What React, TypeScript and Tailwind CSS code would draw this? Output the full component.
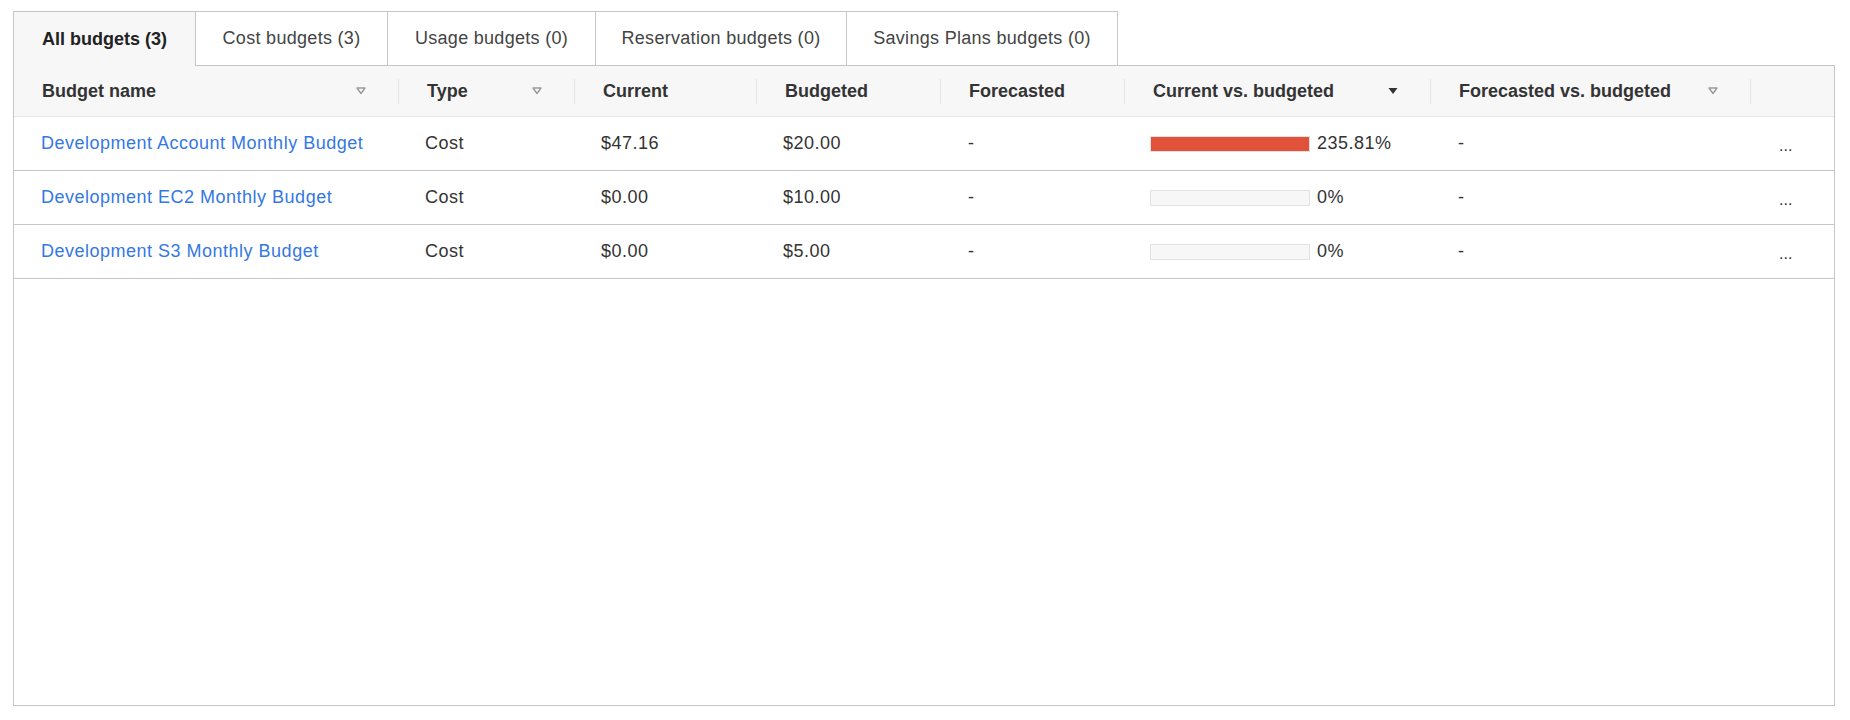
import React from "react";

const tabs = [
  { label: "All budgets (3)", w: "w-[183px]", active: true },
  { label: "Cost budgets (3)", w: "w-[193px]" },
  { label: "Usage budgets (0)", w: "w-[209px]" },
  { label: "Reservation budgets (0)", w: "w-[252px]" },
  { label: "Savings Plans budgets (0)", w: "w-[272px]" },
];

const rows = [
  { name: "Development Account Monthly Budget", current: "$47.16", budgeted: "$20.00", pct: 100, label: "235.81%" },
  { name: "Development EC2 Monthly Budget", current: "$0.00", budgeted: "$10.00", pct: 0, label: "0%" },
  { name: "Development S3 Monthly Budget", current: "$0.00", budgeted: "$5.00", pct: 0, label: "0%" },
];

const cols = "grid grid-cols-[385px_176px_182px_184px_184px_306px_320px_1fr]";

const SortIcon = ({ active }: { active?: boolean }) =>
  active ? (
    <svg width="10" height="8" viewBox="0 0 10 8" className="mr-[32px] shrink-0">
      <polygon points="0.5,1 9.5,1 5,7" fill="#333" />
    </svg>
  ) : (
    <svg width="10" height="8" viewBox="0 0 10 8" className="mr-[32px] shrink-0">
      <polygon points="1,1 9,1 5,6.5" fill="none" stroke="#9a9a9a" strokeWidth="1.4" strokeLinejoin="round" />
    </svg>
  );

const HeadCell = ({ label, sort, active, divider = true }: { label?: string; sort?: boolean; active?: boolean; divider?: boolean }) => (
  <div className="flex items-center pl-[28px]">
    <span className="flex-1 font-bold text-[#333]">{label}</span>
    {sort && <SortIcon active={active} />}
    {divider && <div className="h-[25px] w-px bg-[#e3e5e5]" />}
  </div>
);

export default function App() {
  return (
    <div className="w-[1850px] h-[720px] bg-white pl-[13px] pt-[11px] font-['Liberation_Sans',Arial,sans-serif] text-[18px] text-[#333]">
      <div className="w-[1822px]">
        {/* tabs */}
        <div className="flex items-end">
          {tabs.map((t) => (
            <div
              key={t.label}
              className={
                t.active
                  ? `${t.w} relative z-10 -mb-px flex h-[55px] items-center justify-center border border-b-0 border-[#c6c6c6] bg-[#f7f7f7] font-bold text-[#222]`
                  : `${t.w} -ml-px flex h-[54px] items-center justify-center border border-b-0 border-[#c6c6c6] bg-white tracking-[0.3px] text-[#444]`
              }
            >
              {t.label}
            </div>
          ))}
        </div>

        {/* table box */}
        <div className="h-[641px] border border-[#c6c6c6] bg-white">
          <div className={`${cols} h-[51px] border-b border-[#e6e8e8] bg-[#f7f7f7]`}>
            <HeadCell label="Budget name" sort />
            <HeadCell label="Type" sort />
            <HeadCell label="Current" />
            <HeadCell label="Budgeted" />
            <HeadCell label="Forecasted" />
            <HeadCell label="Current vs. budgeted" sort active />
            <HeadCell label="Forecasted vs. budgeted" sort />
            <HeadCell divider={false} />
          </div>

          {rows.map((r) => (
            <div key={r.name} className={`${cols} h-[54px] border-b border-[#c6c6c6] tracking-[0.5px]`}>
              <div className="flex items-center pl-[27px]">
                <a className="cursor-pointer text-[#3478e3]">{r.name}</a>
              </div>
              <div className="flex items-center pl-[26px]">Cost</div>
              <div className="flex items-center pl-[26px]">{r.current}</div>
              <div className="flex items-center pl-[26px]">{r.budgeted}</div>
              <div className="flex items-center pl-[27px]">-</div>
              <div className="flex items-center pl-[25px]">
                <div className="h-[16px] w-[160px] border border-[#e2e2e2] bg-[#f7f7f7]">
                  <div className="h-full bg-[#e2523a]" style={{ width: `${r.pct}%` }} />
                </div>
                <span className="ml-[7px]">{r.label}</span>
              </div>
              <div className="flex items-center pl-[27px]">-</div>
              <div className="flex items-center pl-[28px] pt-[4px] text-[16px] tracking-normal">...</div>
            </div>
          ))}
        </div>
      </div>
    </div>
  );
}
